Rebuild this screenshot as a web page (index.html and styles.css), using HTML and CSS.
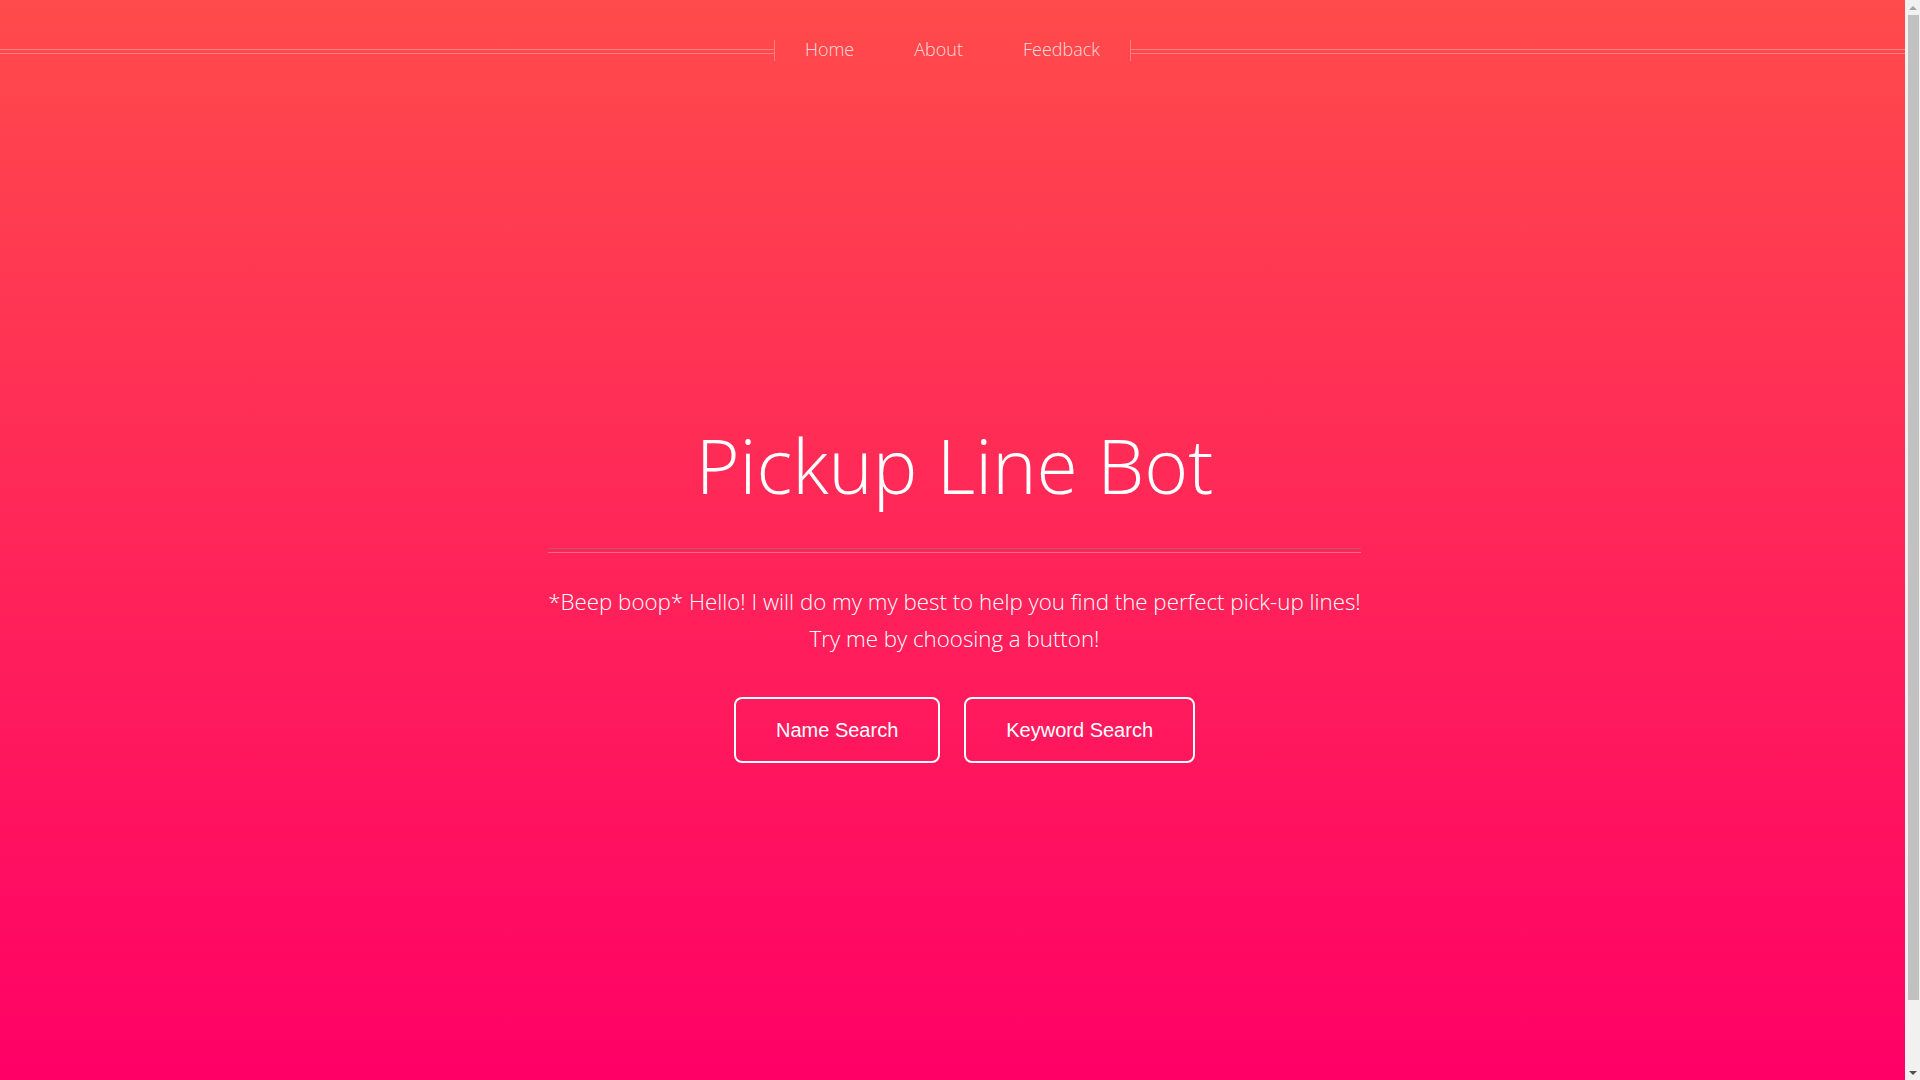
FILE: index.html
```html
<!DOCTYPE html>
<html lang="en">
<head>
<meta charset="utf-8">
<title>Pickup Line Bot</title>
<link rel="stylesheet" href="styles.css">
</head>
<body>
<div class="page">
  <nav class="topnav">
    <div class="rule"></div>
    <ul class="links">
      <li><a href="#">Home</a></li>
      <li><a href="#">About</a></li>
      <li><a href="#">Feedback</a></li>
    </ul>
    <div class="rule"></div>
  </nav>
  <main class="hero">
    <h1 class="title">Pickup Line Bot</h1>
    <div class="divider"></div>
    <p class="intro">*Beep boop* Hello! I will do my my best to help you find the perfect pick-up lines!<br>Try me by choosing a button!</p>
    <div class="actions">
      <button class="btn">Name Search</button>
      <button class="btn">Keyword Search</button>
    </div>
  </main>
</div>
<div class="scrollbar" aria-hidden="true">
  <span class="arrow up"></span>
  <span class="thumb"></span>
  <span class="arrow down"></span>
</div>
</body>
</html>
```
FILE: styles.css
```css
html {
  background: #ff0066;
}
body {
  margin: 0;
  font-family: "Open Sans", "Lato", sans-serif;
  color: #fff;
  overflow: hidden;
}
.page {
  min-height: 100vh;
  margin-right: 15px;
  background: linear-gradient(180deg, #ff4b4b 0%, #ff0066 100%);
  overflow: hidden;
}
.topnav {
  display: flex;
  align-items: flex-start;
  margin-top: 40px;
  height: 21px;
}
.rule {
  flex: 1;
  margin-top: 9px;
  height: 3px;
  border-top: 1px solid rgba(255, 255, 255, 0.3);
  border-bottom: 1px solid rgba(255, 255, 255, 0.3);
}
.links {
  display: flex;
  list-style: none;
  margin: 0;
  padding: 0;
  height: 21px;
  border-left: 1px solid rgba(255, 255, 255, 0.3);
  border-right: 1px solid rgba(255, 255, 255, 0.3);
}
.links a {
  display: block;
  padding: 0 30px;
  font-size: 18px;
  font-weight: 300;
  line-height: 19px;
  color: rgba(255, 255, 255, 0.8);
  text-decoration: none;
}
.hero {
  width: 813px;
  padding-left: 4px;
  margin: 367px auto 0;
  text-align: center;
}
.title {
  margin: 0;
  font-size: 75px;
  font-weight: 300;
  line-height: 75px;
  color: #fff;
}
.divider {
  margin-top: 45px;
  height: 3px;
  border-top: 1px solid rgba(128, 128, 128, 0.6);
  border-bottom: 1px solid rgba(255, 255, 255, 0.3);
}
.intro {
  margin: 30px 0 0;
  font-size: 22.3px;
  font-weight: 300;
  line-height: 37px;
  white-space: nowrap;
  color: #fff;
}
.actions {
  display: flex;
  justify-content: center;
  gap: 24px;
  margin-top: 40px;
  padding-left: 20px;
}
.btn {
  height: 66px;
  padding: 0 40px;
  background: transparent;
  border: 2px solid #fff;
  border-radius: 8px;
  color: #fff;
  font-family: "Liberation Sans", Arial, sans-serif;
  font-size: 20px;
  cursor: pointer;
}

/* browser-style vertical scrollbar */
.scrollbar {
  position: fixed;
  top: 0;
  right: 0;
  bottom: 0;
  width: 15px;
  background: #f1f1f1;
  display: flex;
  flex-direction: column;
  align-items: center;
}
.arrow {
  flex: 0 0 15px;
  width: 15px;
  display: flex;
  align-items: center;
  justify-content: center;
}
.arrow::before {
  content: "";
  width: 0;
  height: 0;
  border-left: 4px solid transparent;
  border-right: 4px solid transparent;
}
.arrow.up::before {
  border-bottom: 4px solid #a3a3a3;
}
.arrow.down {
  margin-top: auto;
}
.arrow.down::before {
  border-top: 4px solid #505050;
}
.thumb {
  width: 11px;
  height: 985px;
  margin-left: 1px;
  background: #c1c1c1;
}
```
